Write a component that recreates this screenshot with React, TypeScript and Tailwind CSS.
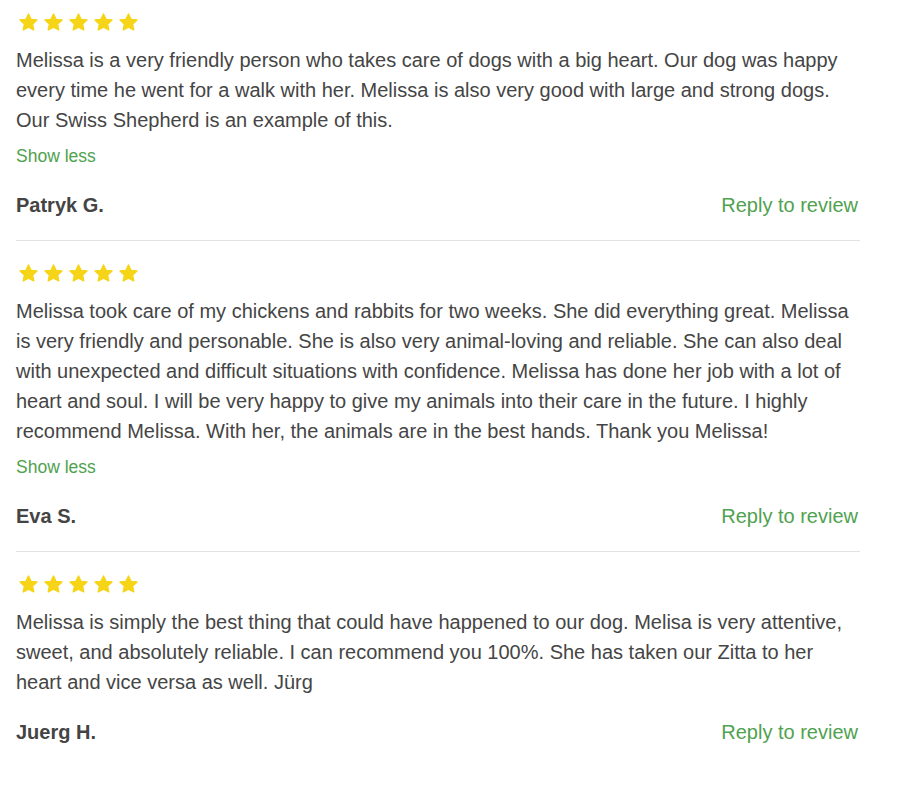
const reviews = [
  {
    name: 'Patryk G.',
    text: 'Melissa is a very friendly person who takes care of dogs with a big heart. Our dog was happy every time he went for a walk with her. Melissa is also very good with large and strong dogs. Our Swiss Shepherd is an example of this.',
    expanded: true,
  },
  {
    name: 'Eva S.',
    text: 'Melissa took care of my chickens and rabbits for two weeks. She did everything great. Melissa is very friendly and personable. She is also very animal-loving and reliable. She can also deal with unexpected and difficult situations with confidence. Melissa has done her job with a lot of heart and soul. I will be very happy to give my animals into their care in the future. I highly recommend Melissa. With her, the animals are in the best hands. Thank you Melissa!',
    expanded: true,
  },
  {
    name: 'Juerg H.',
    text: 'Melissa is simply the best thing that could have happened to our dog. Melisa is very attentive, sweet, and absolutely reliable. I can recommend you 100%. She has taken our Zitta to her heart and vice versa as well. Jürg',
    expanded: false,
  },
]

function Star() {
  return (
    <svg viewBox="0 0 24 24" className="h-[21px] w-[21px]" aria-hidden="true">
      <path
        d="M12 2.2l2.9 6.2 6.8.8-5 4.6 1.3 6.7L12 17.2l-6 3.3 1.3-6.7-5-4.6 6.8-.8z"
        fill="#f6d417"
        stroke="#f6d417"
        strokeWidth="1.6"
        strokeLinejoin="round"
      />
    </svg>
  )
}

export default function App() {
  return (
    <div className="min-h-[790px] bg-white px-4 font-['Liberation_Sans',Arial,sans-serif]">
      <div className="w-[844px]">
        {reviews.map((review, i) => (
          <div
            key={review.name}
            className={i < reviews.length - 1 ? 'border-b border-[#e2e2e2] pb-5' : ''}
          >
            <div className={`flex gap-1 pl-[2px] ${i === 0 ? 'pt-[12px]' : 'pt-[22px]'}`}>
              {[0, 1, 2, 3, 4].map((s) => (
                <Star key={s} />
              ))}
            </div>
            <p className="mt-[12px] text-[20px] leading-[30px] text-[#454545]">{review.text}</p>
            {review.expanded && (
              <button className="mt-[9px] block text-[17.5px] leading-[24px] text-[#4fa24f]">
                Show less
              </button>
            )}
            <div className={`flex items-center justify-between ${review.expanded ? 'mt-[22px]' : 'mt-[20px]'}`}>
              <span className="text-[20px] font-bold leading-[30px] text-[#444]">{review.name}</span>
              <button className="mr-[2px] text-[20px] leading-[30px] text-[#4fa24f]">Reply to review</button>
            </div>
          </div>
        ))}
      </div>
    </div>
  )
}
